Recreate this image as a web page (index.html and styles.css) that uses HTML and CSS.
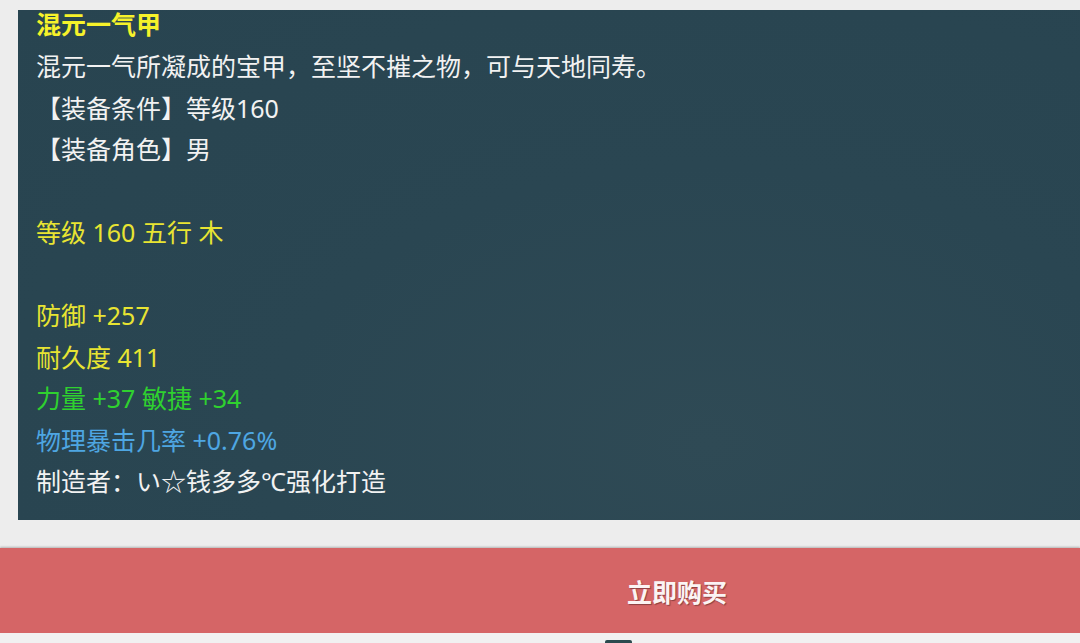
FILE: index.html
```html
<!DOCTYPE html>
<html lang="zh-CN">
<head>
    <meta charset="UTF-8">
    <meta name="viewport" content="width=device-width, initial-scale=1.0">
    <title>混元一气甲</title>
    <link rel="stylesheet" href="styles.css">
</head>
<body>

<div class="page">
    <div class="item-panel">
        <div class="item-name">混元一气甲</div>
        <div class="line white">混元一气所凝成的宝甲，至坚不摧之物，可与天地同寿。</div>
        <div class="line white">【装备条件】等级160</div>
        <div class="line white">【装备角色】男</div>
        <div class="line blank"></div>
        <div class="line yellow">等级 160 五行 木</div>
        <div class="line blank"></div>
        <div class="line yellow">防御 +257</div>
        <div class="line yellow">耐久度 411</div>
        <div class="line green">力量 +37 敏捷 +34</div>
        <div class="line blue">物理暴击几率 +0.76%</div>
        <div class="line white">制造者：い☆钱多多℃强化打造</div>
    </div>

    <!-- buy bar -->
    <div class="buy-bar">
        <button type="button" class="buy-btn">立即购买</button>
    </div>

    <div class="bottom-strip">
        <span class="handle"></span>
    </div>
</div>

</body>
</html>
```

FILE: styles.css
```css
html, body {
    margin: 0;
    padding: 0;
}
body {
    font-family: "Noto Sans", "Noto Sans CJK SC", sans-serif;
    background-color: #ededed;
    overflow: hidden;
}
.page {
    width: 1080px;
    height: 643px;
    padding-top: 10px;
    box-sizing: border-box;
}
.item-panel {
    margin-left: 18px;
    height: 510px;
    box-sizing: border-box;
    padding: 0 0 0 18px;
    background: radial-gradient(ellipse at 65% 85%, #2f4a55 0%, #2a4652 45%, #284450 100%);
    font-size: 25px;
}
.item-name {
    color: #f6f22a;
    font-weight: bold;
    line-height: 28px;
    margin-bottom: 8px;
}
.line {
    line-height: 41.5px;
    height: 41.5px;
    white-space: nowrap;
}
.white {
    color: #f2f2f2;
}
.yellow {
    color: #e8e432;
}
.green {
    color: #2fd12f;
}
.blue {
    color: #4ea6e2;
}
.buy-bar {
    margin-top: 28px;
    height: 85px;
    background-color: #d56566;
    box-shadow: 0 -1px 2px rgba(0, 0, 0, 0.25);
}
.buy-btn {
    display: block;
    width: 100%;
    height: 85px;
    padding: 0 0 0 274px;
    border: none;
    background: transparent;
    color: #fbf4f4;
    font-family: "Noto Sans CJK SC", sans-serif;
    font-size: 25px;
    font-weight: bold;
    text-align: center;
    text-shadow: 1px 1px 1px rgba(90, 40, 40, 0.6);
    cursor: pointer;
}
.bottom-strip {
    height: 10px;
    background-color: #f1f1f1;
    position: relative;
}
.handle {
    position: absolute;
    left: 605px;
    top: 7px;
    width: 27px;
    height: 3px;
    border-radius: 2px 2px 0 0;
    background-color: #2b4a4e;
}
```
